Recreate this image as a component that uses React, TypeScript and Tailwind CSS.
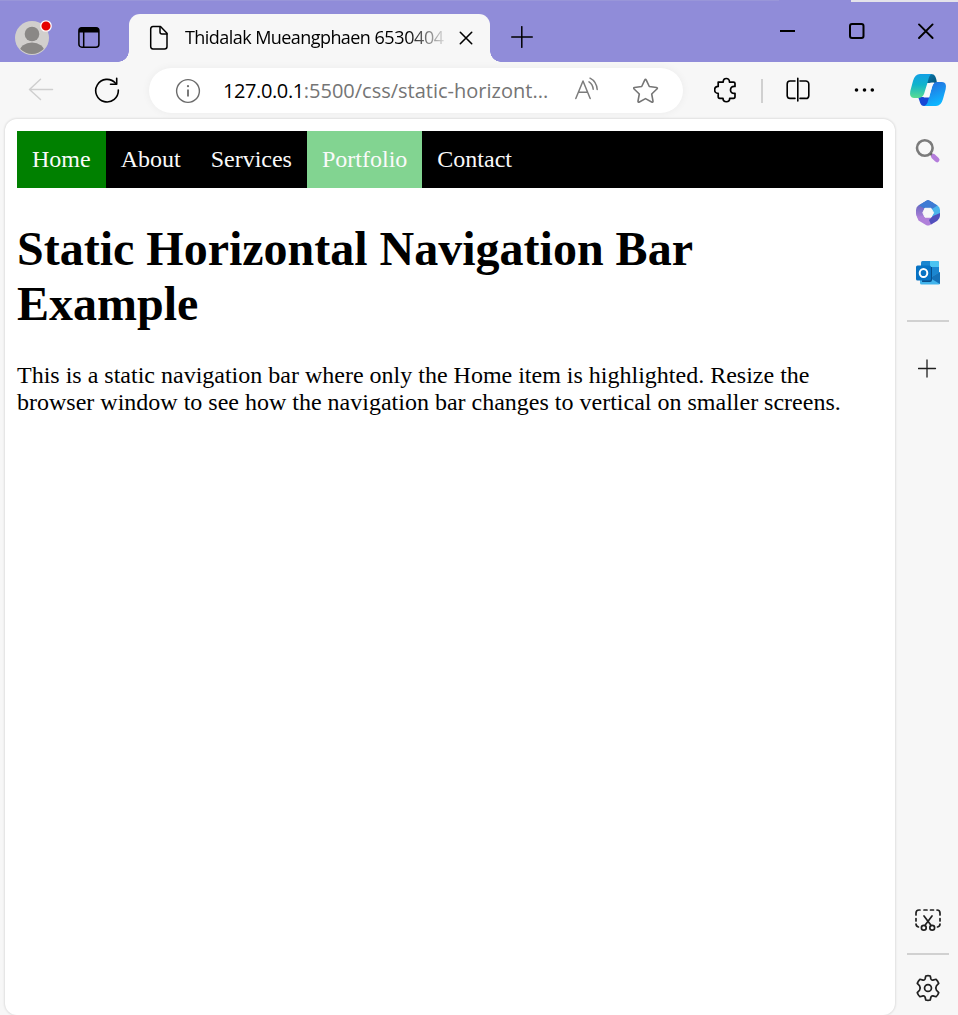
import React from "react";

type IconProps = {
  w: number;
  h: number;
  className?: string;
  sw?: number;
  children: React.ReactNode;
};

function Icon({ w, h, className = "", sw = 1.6, children }: IconProps) {
  return (
    <svg
      width={w}
      height={h}
      viewBox={`0 0 ${w} ${h}`}
      fill="none"
      stroke="currentColor"
      strokeWidth={sw}
      strokeLinecap="round"
      strokeLinejoin="round"
      className={`shrink-0 ${className}`}
    >
      {children}
    </svg>
  );
}

function TitleBar() {
  return (
    <header className="relative flex h-[62px] shrink-0 items-start bg-[#908cd9] text-black">
      <div className="absolute left-0 top-0 h-px w-[779px] bg-[#9996d9]" />
      <div className="absolute right-0 top-0 h-[2px] w-[107px] bg-[#e4e3ea]" />
      <Icon w={38} h={38} className="ml-[14px] mt-[18px]">
        <defs>
          <clipPath id="avatar">
            <circle cx="18" cy="20" r="16" />
          </clipPath>
        </defs>
        <circle cx="18" cy="20" r="17" fill="#d1cfcd" stroke="none" />
        <g clipPath="url(#avatar)" fill="#8a8886" stroke="none">
          <circle cx="18" cy="16" r="7.3" />
          <ellipse cx="18" cy="34" rx="12.5" ry="9.5" />
        </g>
        <circle cx="32" cy="8" r="5.2" fill="#e60000" stroke="#fff" strokeWidth="1.3" />
      </Icon>
      <Icon w={22} h={22} className="ml-[26px] mt-[26px]" sw={1.5}>
        <rect x="0.9" y="1.7" width="20" height="19.5" rx="3" />
        <path d="M1 6.5V4.5A3 3 0 0 1 4 1.5H18A3 3 0 0 1 21 4.5V6.5Z" fill="#000" stroke="none" />
        <path d="M5.7 6V21" />
      </Icon>
      <div className="relative ml-[29px] mt-[14px] flex h-12 w-[361px] items-start rounded-t-[11px] bg-[#f7f7f7]">
        <div className="absolute -left-[11px] bottom-0 size-[11px] bg-[radial-gradient(circle_at_0_0,transparent_10.5px,#f7f7f7_11px)]" />
        <div className="absolute -right-[11px] bottom-0 size-[11px] bg-[radial-gradient(circle_at_100%_0,transparent_10.5px,#f7f7f7_11px)]" />
        <Icon w={20} h={26} className="ml-5 mt-[11px]" sw={1.5}>
          <path d="M4 1.5H11.5L18 8.2V21.5A2.5 2.5 0 0 1 15.5 24H4A2.5 2.5 0 0 1 1.7 21.5V4A2.5 2.5 0 0 1 4 1.5Z" />
          <path d="M11 2V7A2 2 0 0 0 13 9H18" />
        </Icon>
        <div className="ml-4 mt-[8px] w-[262px] whitespace-nowrap font-['Open_Sans',sans-serif] text-[18px] leading-[30px] tracking-[-0.56px] [mask-image:linear-gradient(to_right,black_222px,transparent_264px)]">
          Thidalak Mueangphaen <span className="tracking-[-0.4px]">6530404</span>
        </div>
        <Icon w={14} h={14} className="ml-3 mt-[17px]" sw={1.6}>
          <path d="M1.3 1.3L12.7 12.7M12.7 1.3L1.3 12.7" />
        </Icon>
      </div>
      <Icon w={22} h={22} className="ml-[21px] mt-[26px]" sw={1.5}>
        <path d="M.7 11H21.3M10.8 .7V21.3" />
      </Icon>
      <div className="ml-auto flex pr-[24px] pt-[22px]">
        <Icon w={17} h={18} sw={2} className="mr-[52px]">
          <path d="M2 9H15" strokeLinecap="square" />
        </Icon>
        <Icon w={17} h={18} sw={2} className="mr-[52px]">
          <rect x="2" y="2" width="13.5" height="14" rx="2" />
        </Icon>
        <Icon w={17} h={18} sw={1.9}>
          <path d="M2 2.4L15.6 16M15.6 2.4L2 16" />
        </Icon>
      </div>
    </header>
  );
}

function Toolbar() {
  return (
    <div className="flex h-[57px] shrink-0 items-center text-black">
      <Icon w={26} h={24} className="ml-7 -mt-[3px] text-[#cfcfcf]" sw={1.5}>
        <path d="M24.5 12.5H1.5M12.5 2.2L1.5 12.5L12.5 22.5" />
      </Icon>
      <Icon w={26} h={26} className="ml-10 -mt-[2px]" sw={1.6}>
        <path d="M21.5 6.2A11.3 11.3 0 1 0 24.3 13" />
        <path d="M22.7 1.2V7.2H16.5" />
      </Icon>
      <div className="ml-[29px] flex h-[45px] w-[534px] items-center rounded-full bg-white shadow-[0_0_8px_#0000000d]">
        <Icon w={26} h={26} className="ml-[26px] text-[#6b6b6b]" sw={1.4}>
          <circle cx="13" cy="13" r="11.4" />
          <path d="M13 11.5V18.5" strokeLinecap="butt" strokeWidth="1.8" />
          <circle cx="13" cy="8.2" r="1.1" fill="currentColor" stroke="none" />
        </Icon>
        <div className="ml-[22px] w-[330px] shrink-0 whitespace-nowrap font-['Open_Sans',sans-serif] text-[20px] leading-[30px] tracking-[0px] text-[#757575]">
          <span className="tracking-[-0.4px] text-black">127.0.0.1</span>:5500/css/static-horizont...
        </div>
        <Icon w={26} h={25} className="ml-[21px] -mt-[3px] text-[#7c7c7c]" sw={1.5}>
          <path d="M1.8 21.5L9 4L16.2 21.5M4.3 15.2H13.7" />
          <path d="M15 4.8Q18.8 7 19.2 12.3M16 1.2Q22.5 4.5 23.2 12.5" />
        </Icon>
        <Icon w={26} h={26} className="ml-[33px] text-[#757575]" sw={1.6}>
          <path d="M11.7 2.1Q12.5 .5 13.3 2.1L16.3 8.5L23.5 9.5Q25 9.8 23.9 11L18.7 16L20 23.1Q20.1 24.8 18.6 24L12.5 20.6L6.4 24Q4.9 24.8 5 23.1L6.3 16L1.1 11Q0 9.8 1.5 9.5L8.7 8.5Z" />
        </Icon>
      </div>
      <Icon w={24} h={26} className="ml-[31px] -mt-px" sw={1.7}>
        <path d="M4.2 5.1H9.2C9.2 0.3 15.5 .3 15.5 5.1H19.5Q21 5.1 21 6.6V9.4C15 8.5 15 17.3 21 16.4V19.5Q21 21.3 19.5 21.3H15.7C15.7 25.9 9 25.9 9 21.3H5.7Q4.2 21.3 4.2 19.5V16.4C-.5 16.4 -.5 9.4 4.2 9.4Z" />
      </Icon>
      <div className="ml-[23px] h-6 w-[2px] bg-[#d0d0d0]" />
      <Icon w={25} h={26} className="ml-[23px] -mt-px" sw={1.6}>
        <path d="M9 4H4A3 3 0 0 0 1.2 7V18.8A3 3 0 0 0 4 21.4H9M14 4H19.5A3 3 0 0 1 22.8 7V18.8A3 3 0 0 1 19.5 21.4H14M11.8 1.2V24" />
      </Icon>
      <Icon w={22} h={8} className="ml-[42px] -mt-px" sw={0}>
        <g fill="currentColor">
          <circle cx="3.5" cy="4" r="1.8" />
          <circle cx="11.5" cy="4" r="1.8" />
          <circle cx="19.3" cy="4" r="1.8" />
        </g>
      </Icon>
    </div>
  );
}

function NavItem({ label, className = "" }: { label: string; className?: string }) {
  return <a className={`block px-[15px] py-[15px] leading-[27px] ${className}`}>{label}</a>;
}

function Page() {
  return (
    <main className="ml-[5px] flex-1 rounded-xl bg-white px-3 pt-3 font-['Liberation_Serif',serif] text-2xl text-black shadow-[0_0_2px_1px_#00000018]">
      <nav className="flex h-[57px] bg-black text-[#fafafa]">
        <NavItem label="Home" className="bg-[#008000]" />
        <NavItem label="About" />
        <NavItem label="Services" />
        <NavItem label="Portfolio" className="bg-[#82d491]" />
        <NavItem label="Contact" />
      </nav>
      <h1 className="mt-[33px] text-5xl font-bold leading-[55px]">
        Static Horizontal Navigation Bar
        <br />
        Example
      </h1>
      <p className="mt-[31px] whitespace-nowrap leading-[27px]">
        This is a static navigation bar where only the Home item is highlighted. Resize the
        <br />
        browser window to see how the navigation bar changes to vertical on smaller screens.
      </p>
    </main>
  );
}

function Sidebar() {
  return (
    <aside className="flex w-[63px] shrink-0 flex-col items-center pl-[2px] pt-[11px] text-[#202020]">
      <svg width="38" height="34" viewBox="0 0 38 34" className="shrink-0">
        <defs>
          <linearGradient id="cpA" x1="0" y1="0" x2="0" y2="1">
            <stop offset="0" stopColor="#12a0e5" />
            <stop offset=".45" stopColor="#10b4cb" />
            <stop offset="1" stopColor="#59dc91" />
          </linearGradient>
          <linearGradient id="cpB" x1="0" y1="0" x2=".4" y2="1">
            <stop offset="0" stopColor="#2864d9" />
            <stop offset="1" stopColor="#0eb5ff" />
          </linearGradient>
          <linearGradient id="cpC" x1="0" y1="0" x2="1" y2="1">
            <stop offset="0" stopColor="#087cb5" />
            <stop offset="1" stopColor="#075476" />
          </linearGradient>
        </defs>
        <path d="M16 1H22C26 1 27 4 28 10H17Z" fill="url(#cpC)" />
        <path d="M9 24H20L24 33H15C11 33 11 28 9 24Z" fill="#1747d5" />
        <path d="M11 1H23Q20 2 19 8L15 21Q13.5 25 9 25H5Q0 25 1.3 18L4 8Q6 1 11 1Z" fill="url(#cpA)" />
        <path d="M28 9H33Q38 9 36.7 16L34 26Q32 33 27 33H14Q18 33 19.3 27L23 14Q24.5 9 28 9Z" fill="url(#cpB)" />
        <path d="M18.5 12.5Q19.5 9.5 23 9.5H25.5Q24 10.5 23.3 13L20 24.5H14.7Z" fill="#f9f9f9" />
      </svg>
      <svg width="26" height="26" viewBox="0 0 26 26" className="mt-[31px] shrink-0">
        <circle cx="9.8" cy="10" r="7.8" fill="none" stroke="#7b7b7b" strokeWidth="2.6" />
        <path d="M15.5 15.5L19 19" stroke="#666" strokeWidth="2.5" />
        <path d="M18.5 18.5L22 21.8" stroke="#b47ddb" strokeWidth="5" strokeLinecap="round" />
      </svg>
      <svg width="26" height="28" viewBox="0 0 26 28" className="mt-[35px] shrink-0">
        <defs>
          <linearGradient id="m365" x1="0" y1="0" x2="0" y2="1">
            <stop stopColor="#5261b8" />
            <stop offset="1" stopColor="#bb85dd" />
          </linearGradient>
        </defs>
        <path d="M11 2Q13 .6 15 2L22.5 6.4Q25 8 25 11V17.5L17 18V10L7 5Z" fill="#4bb5ec" />
        <path d="M11 2Q13 .6 15 2L18.5 4L9 9.5V18L7 21.5L3 19Q1 17.5 1 15V11Q1 8 3.3 6.5Z" fill="url(#m365)" />
        <path d="M11 2Q13 .6 15 2L22.5 6.4L17 10L9 9.2L4 6.2Z" fill="#3e7bd4" />
        <path d="M2 18L9 16.5L17 18L22 22L15 26Q13 27.2 11 26L3.5 21.5Z" fill="#b080da" />
        <path d="M18 17L25 14V16Q25 20 22.5 21.6L16 25.4L14 21Z" fill="#5150bd" />
        <path d="M10 9.3H16L18.6 13.7L16 18.2H10L7.8 13.7Z" fill="#f7f7f7" stroke="#f7f7f7" strokeLinejoin="round" />
      </svg>
      <svg width="26" height="26" viewBox="0 0 26 26" className="mt-[33px] shrink-0">
        <rect x="6" y="1" width="18" height="18" rx="1.5" fill="#1b86d0" />
        <path d="M15 1H22.5Q24 1 24 2.5V7H15Z" fill="#4cc4f2" />
        <path d="M6 7H15V13H6Z" fill="#0364b8" />
        <path d="M5 12L15 18L25 12V23Q25 24.5 23.5 24.5H6.5Q5 24.5 5 23Z" fill="#42b4ec" />
        <path d="M25 12V24L15 18Z" fill="#1471b8" />
        <path d="M8 7H17V20Q17 22 15 22H7Z" fill="#084f8b" />
        <rect x="1" y="5.5" width="15" height="15" rx="1.5" fill="#0873c4" />
        <ellipse cx="8.5" cy="13" rx="3.8" ry="4.1" fill="none" stroke="#fff" strokeWidth="2" />
      </svg>
      <div className="mt-[34px] h-[2px] w-[42px] shrink-0 bg-[#d1d1d1]" />
      <Icon w={20} h={20} className="mt-[36px]" sw={1.3}>
        <path d="M.5 10.5H17.5M9 2V19" />
      </Icon>
      <div className="mt-auto flex flex-col items-center pb-[12px]">
        <Icon w={26} h={26} sw={1.7}>
          <path d="M1 7V5Q1 2 4 2H5M9 2H12M15.5 2H18.5M22 2Q25 2 25 5V7M25 10.5V13M25 16Q25 18.5 22.5 19M1 10.5V13M1 16Q1 18.3 3.5 19" />
          <path d="M9 8L15.8 17M17 8L10.2 17" />
          <circle cx="8.8" cy="19.8" r="2.4" />
          <circle cx="17.2" cy="19.8" r="2.4" />
        </Icon>
        <div className="mt-[19px] h-[2px] w-[42px] bg-[#d1d1d1]" />
        <Icon w={28} h={28} className="mt-[20px] -translate-y-px" sw={1.6}>
          <g transform="translate(14 14) scale(1.23) translate(-12 -12)" strokeWidth="1.4">
            <path d="M10.2 2.2Q12 1.6 13.8 2.2L14.4 4.7Q14.8 5.8 16 5.6L18.6 4.9Q20 6.2 20.7 8.2L18.9 10.2Q17.8 12 18.9 13.8L20.7 15.8Q20 17.8 18.6 19.1L16 18.4Q14.8 18.2 14.4 19.3L13.8 21.8Q12 22.4 10.2 21.8L9.6 19.3Q9.2 18.2 8 18.4L5.4 19.1Q4 17.8 3.3 15.8L5.1 13.8Q6.2 12 5.1 10.2L3.3 8.2Q4 6.2 5.4 4.9L8 5.6Q9.2 5.8 9.6 4.7Z" />
            <circle cx="12" cy="12" r="2.8" />
          </g>
        </Icon>
      </div>
    </aside>
  );
}

export default function App() {
  return (
    <div className="flex h-[1015px] w-[958px] flex-col overflow-hidden bg-[#f7f7f7]">
      <TitleBar />
      <div className="flex min-h-0 flex-1">
        <div className="flex w-[895px] shrink-0 flex-col">
          <Toolbar />
          <Page />
        </div>
        <Sidebar />
      </div>
    </div>
  );
}
